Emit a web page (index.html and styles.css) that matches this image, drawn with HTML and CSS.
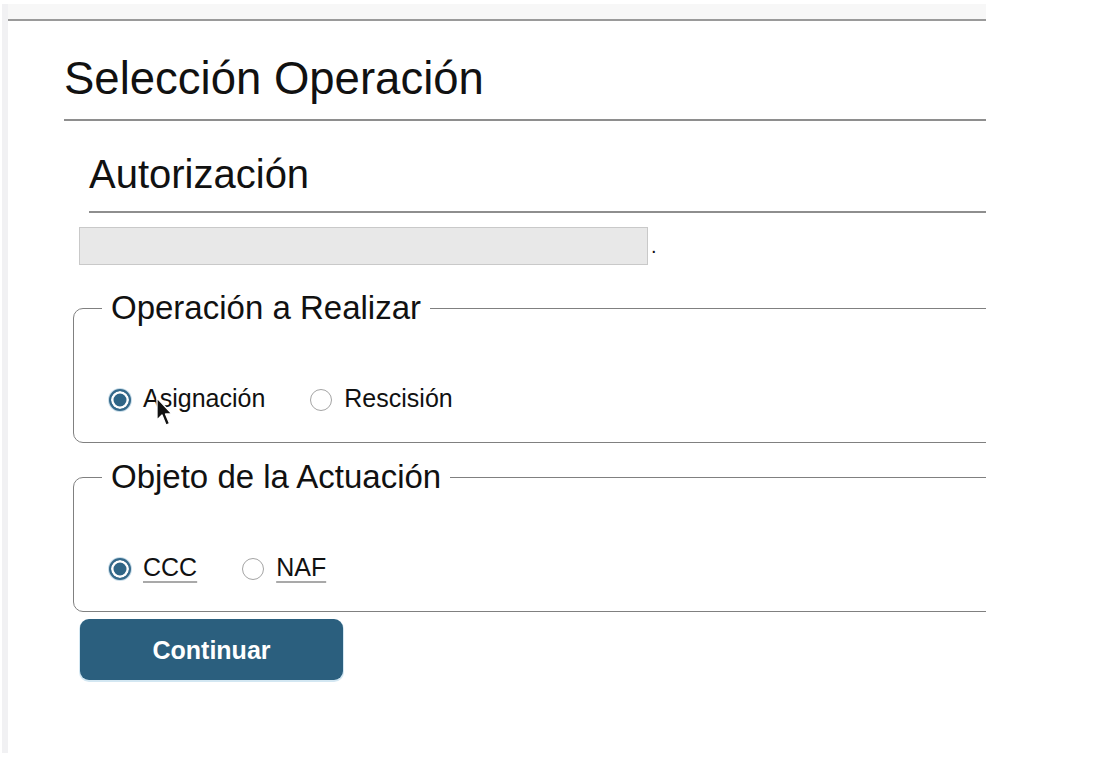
FILE: index.html
```html
<!DOCTYPE html>
<html lang="es">
<head>
<meta charset="utf-8">
<title>Selección Operación</title>
<link rel="stylesheet" href="styles.css">
</head>
<body>
<div class="frame">
  <div class="topbar"></div>
  <div class="content">
    <h1 class="title">Selección Operación</h1>
    <h2 class="subtitle">Autorización</h2>
    <p class="info"><span class="masked"></span>.</p>

    <fieldset class="group">
      <legend>Operación a Realizar</legend>
      <div class="options">
        <label class="opt"><input type="radio" name="op" checked><span>Asignación</span></label>
        <label class="opt"><input type="radio" name="op"><span>Rescisión</span></label>
      </div>
    </fieldset>

    <fieldset class="group group-second">
      <legend>Objeto de la Actuación</legend>
      <div class="options">
        <label class="opt"><input type="radio" name="obj" checked><abbr>CCC</abbr></label>
        <label class="opt"><input type="radio" name="obj"><abbr>NAF</abbr></label>
      </div>
    </fieldset>

    <button class="btn" type="button">Continuar</button>
  </div>
  <svg class="cursor" width="18" height="30" viewBox="0 0 18 30"><path d="M1 1 L1 23 L6 18 L10 28 L13.5 26.5 L9.5 17 L16 17 Z" fill="#111" stroke="#fff" stroke-width="1.3" stroke-linejoin="round"/></svg>
</div>
</body>
</html>
```

FILE: styles.css
```css
html, body {
  margin: 0;
  padding: 0;
  background: #ffffff;
}
body {
  font-family: "Liberation Sans", Arial, sans-serif;
  color: #111;
}
.frame {
  position: relative;
  margin: 4px 0 0 2px;
  width: 984px;
  height: 749px;
  overflow: hidden;
  background: #fff;
  box-sizing: border-box;
  border-left: 6px solid #f1f1f3;
}
.topbar {
  height: 15px;
  background: #f7f7f7;
  border-bottom: 2px solid #9a9a9a;
}
.content {
  padding-left: 56px;
}
.title {
  margin: 31px 0 0 0;
  font-size: 45.5px;
  line-height: 54px;
  font-weight: normal;
  padding-bottom: 13px;
  border-bottom: 2px solid #8e8e8e;
}
.subtitle {
  margin: 29px 0 0 25px;
  font-size: 40px;
  line-height: 48px;
  font-weight: normal;
  padding-bottom: 13px;
  border-bottom: 2px solid #8e8e8e;
}
.info {
  margin: 14px 0 0 15px;
  font-size: 20px;
  line-height: 38px;
  height: 40px;
}
.masked {
  display: inline-block;
  vertical-align: top;
  width: 567px;
  height: 36px;
  background: #e8e8e8;
  border: 1px solid #c9c9c9;
  margin-right: 3px;
}
.group {
  margin: 22px -30px 0 9px;
  padding: 58px 0 27px 35px;
  border: 1px solid #808080;
  border-radius: 10px;
}
.group-second {
  margin-top: 15px;
}
.group legend {
  font-size: 33px;
  line-height: 38px;
  padding: 0 9px;
  margin-left: -7px;
}
.options {
  display: flex;
  align-items: center;
  gap: 45px;
  height: 30px;
}
.opt {
  display: flex;
  align-items: center;
  gap: 12px;
  font-size: 25px;
  line-height: 30px;
}
.opt span, .opt abbr {
  position: relative;
  top: -2px;
}
.opt input {
  appearance: none;
  -webkit-appearance: none;
  margin: 0;
  width: 22px;
  height: 22px;
  border-radius: 50%;
  border: 1.5px solid #a4a4a4;
  background: #fff;
  box-sizing: border-box;
}
.opt input:checked {
  border: 2.5px solid #35698a;
  background: #2f6586;
  box-shadow: inset 0 0 0 2.5px #fff, 0 0 0 1px #c9dde9;
}
.opt abbr {
  text-decoration: underline;
  text-decoration-color: #a9a9a9;
  text-decoration-thickness: 2px;
  text-underline-offset: 5px;
}
.btn {
  display: block;
  margin: 7px 0 0 16px;
  width: 263px;
  height: 61px;
  border: none;
  border-radius: 9px;
  background: #2b5f7e;
  color: #fff;
  font-family: "Liberation Sans", Arial, sans-serif;
  font-weight: bold;
  font-size: 25px;
  padding-top: 2px;
  box-shadow: 0 1px 0 1px #d3e7f2;
}
.cursor {
  position: absolute;
  left: 148px;
  top: 393px;
}
```
